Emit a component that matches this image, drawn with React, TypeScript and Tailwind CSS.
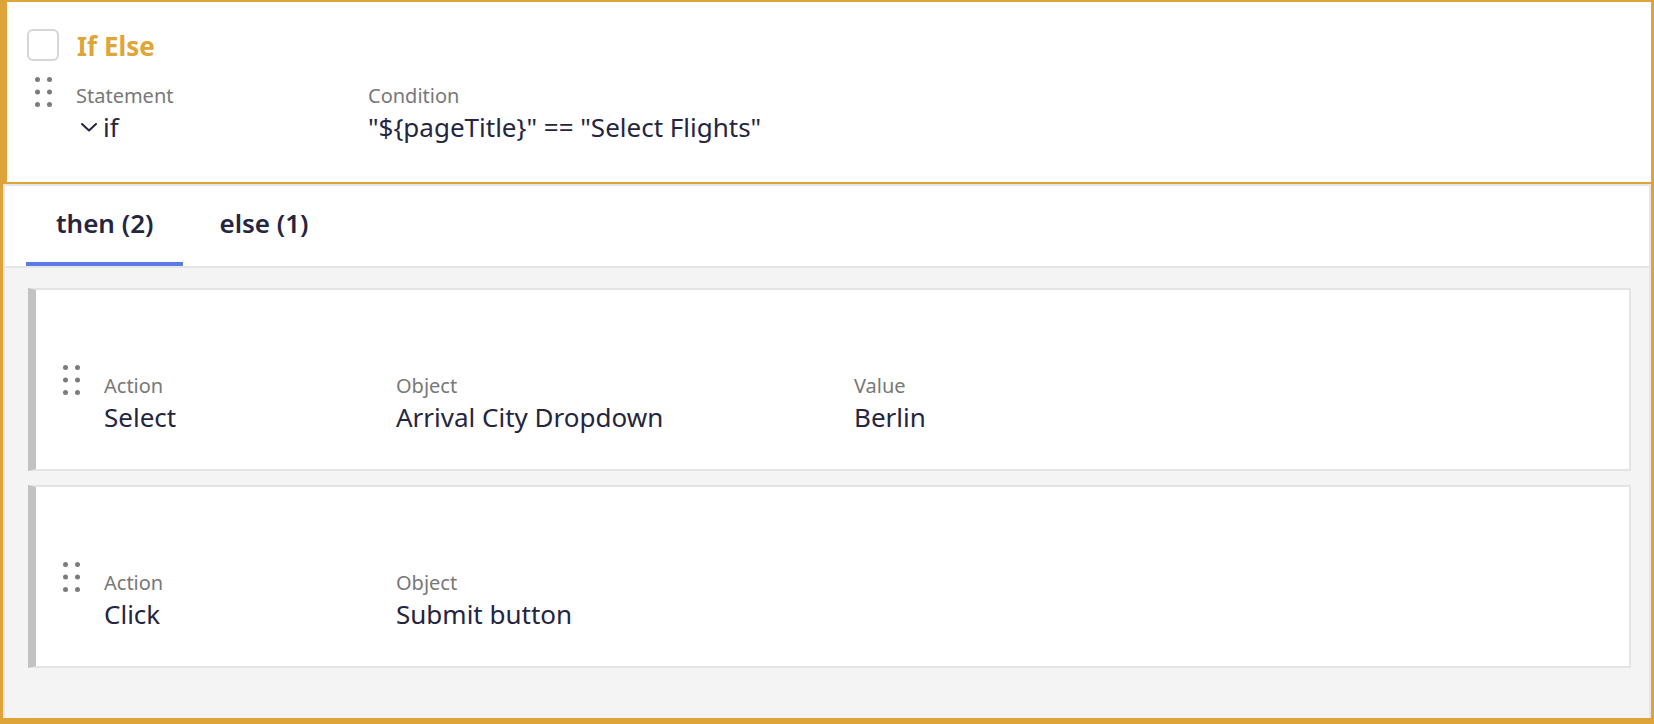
import { useState } from 'react';

const font = { fontFamily: '"Noto Sans", "Open Sans", sans-serif' };

function DragDots() {
  return (
    <svg width="17" height="30" viewBox="0 0 17 30" className="shrink-0 fill-[#7c7c7c]">
      <circle cx="2.5" cy="2.5" r="2.5" />
      <circle cx="14.5" cy="2.5" r="2.5" />
      <circle cx="2.5" cy="15" r="2.5" />
      <circle cx="14.5" cy="15" r="2.5" />
      <circle cx="2.5" cy="27.5" r="2.5" />
      <circle cx="14.5" cy="27.5" r="2.5" />
    </svg>
  );
}

function Field({ label, value, width }: { label: string; value: string; width?: string }) {
  return (
    <div className={width ?? ''}>
      <div className="text-[20px] leading-[27px] text-[#787878]">{label}</div>
      <div className="text-[26px] leading-[36px] text-[#25253f]">{value}</div>
    </div>
  );
}

interface Step {
  action: string;
  object: string;
  value?: string;
}

const steps: Step[] = [
  { action: 'Select', object: 'Arrival City Dropdown', value: 'Berlin' },
  { action: 'Click', object: 'Submit button' },
];

function StepCard({ step }: { step: Step }) {
  return (
    <div className="h-[183px] bg-white border-2 border-[#e4e4e4] border-l-[8px] border-l-[#c2c2c2] pt-[82px] pl-[27px] flex items-start">
      <div className="-mt-[7px]">
        <DragDots />
      </div>
      <div className="flex ml-[24px]">
        <Field label="Action" value={step.action} width="w-[292px]" />
        <Field label="Object" value={step.object} width="w-[458px]" />
        {step.value && <Field label="Value" value={step.value} />}
      </div>
    </div>
  );
}

export default function App() {
  const [tab, setTab] = useState<'then' | 'else'>('then');
  const [checked, setChecked] = useState(false);

  return (
    <div
      style={font}
      className="w-full h-[724px] bg-white border-[#dea43a] border-t-2 border-l-[3px] border-r-[3px] border-b-[6px] flex flex-col"
    >
      {/* Header */}
      <div className="h-[182px] shrink-0 border-l-4 border-b-2 border-[#dea43a] bg-white pt-6 pl-5">
        <div className="flex items-center gap-[18px]">
          <button
            onClick={() => setChecked(c => !c)}
            className="w-8 h-8 rounded-md border-2 border-[#d6d6da] bg-white"
          />
          <span className="mt-[2px] text-[26px] leading-[36px] font-bold text-[#e0a537]">If Else</span>
        </div>
        <div className="flex items-start mt-[18px] pl-[8px]">
          <div className="-mt-[5px]">
            <DragDots />
          </div>
          <div className="flex ml-[24px]">
            <div className="w-[292px]">
              <div className="text-[20px] leading-[27px] text-[#787878]">Statement</div>
              <div className="flex items-center text-[26px] leading-[36px] text-[#25253f]">
                <svg width="16" height="9" viewBox="0 0 16 9" className="ml-[5px] mr-[6px] mt-[1px]">
                  <path d="M1 1l7 6.5L15 1" fill="none" stroke="#25253f" strokeWidth="2" strokeLinecap="round" strokeLinejoin="round" />
                </svg>
                if
              </div>
            </div>
            <Field label="Condition" value={'"${pageTitle}" == "Select Flights"'} />
          </div>
        </div>
      </div>

      {/* Branches */}
      <div className="flex-1 flex flex-col border-2 border-b-0 border-[#e6e6e6]">
        <div className="h-[82px] shrink-0 bg-white border-b-2 border-[#e6e6e6] flex items-end pl-[21px] gap-[6px]">
          <button
            onClick={() => setTab('then')}
            className={`px-[30px] pt-[19px] pb-[21px] border-b-4 text-[26px] leading-[36px] font-semibold text-[#25253f] ${tab === 'then' ? 'border-[#5b7be4]' : 'border-transparent'}`}
          >
            then (2)
          </button>
          <button
            onClick={() => setTab('else')}
            className={`px-[30px] pt-[19px] pb-[21px] border-b-4 text-[26px] leading-[36px] font-semibold text-[#25253f] ${tab === 'else' ? 'border-[#5b7be4]' : 'border-transparent'}`}
          >
            else (1)
          </button>
        </div>
        <div className="flex-1 bg-[#f4f4f4] pt-5 pl-[23px] pr-[18px] flex flex-col gap-[14px]">
          {steps.map((s, i) => (
            <StepCard key={i} step={s} />
          ))}
        </div>
      </div>
    </div>
  );
}
